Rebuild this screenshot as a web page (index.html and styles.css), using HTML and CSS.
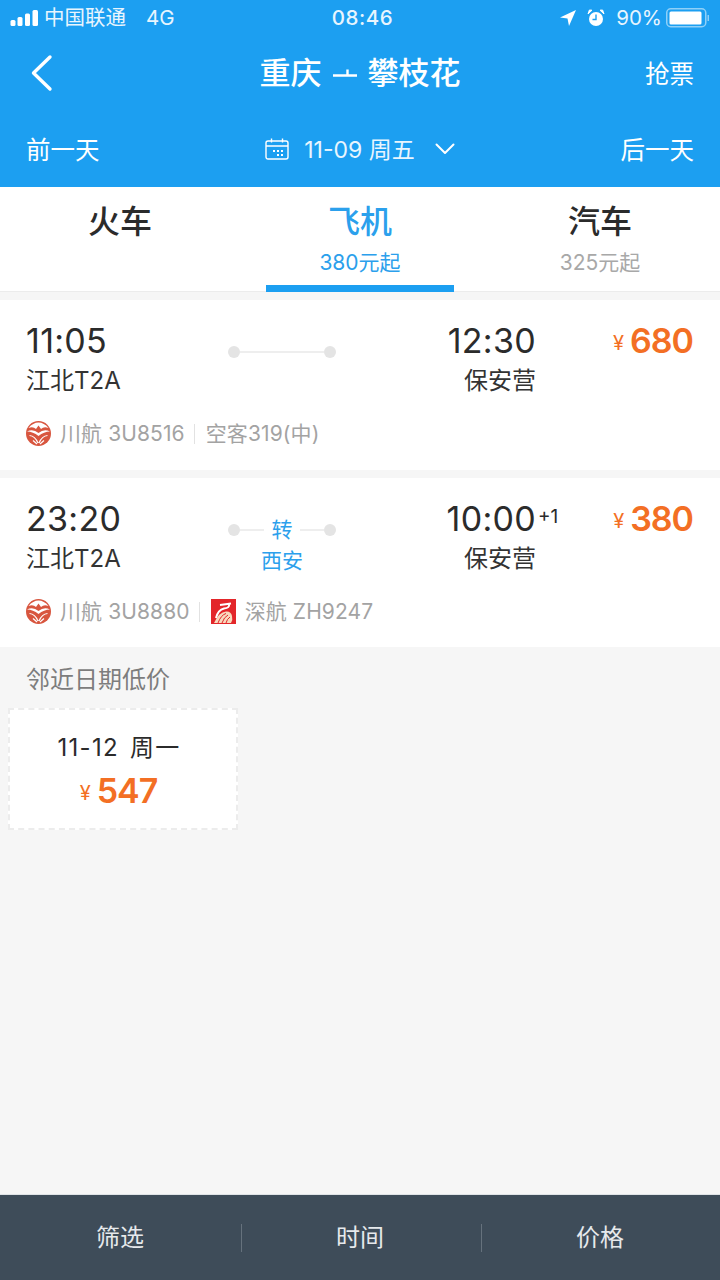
FILE: index.html
```html
<!DOCTYPE html>
<html lang="zh">
<head>
    <meta charset="utf-8">
    <title>重庆 - 攀枝花</title>
    <link rel="stylesheet" href="styles.css">
</head>
<body>
    <header class="top">
        <div class="status">
            <div class="status-left">
                <svg class="signal" width="29" height="17" viewBox="0 0 29 17">
                    <rect x="0.5" y="10" width="5" height="6" rx="1.5" fill="#fff"/>
                    <rect x="7.5" y="7" width="5" height="9" rx="1.5" fill="#fff"/>
                    <rect x="15" y="3.5" width="5" height="12.5" rx="1.5" fill="#fff"/>
                    <rect x="22.5" y="0" width="5.5" height="16" rx="1.5" fill="#fff"/>
                </svg>
                <span class="carrier">中国联通</span>
                <span class="net">4G</span>
            </div>
            <div class="clock">08:46</div>
            <div class="status-right">
                <svg width="18" height="18" viewBox="0 0 18 18"><path d="M17 1 1 8.5l7.5 1L10 17z" fill="#fff"/></svg>
                <svg class="alarm" width="18" height="18" viewBox="0 0 18 18">
                    <circle cx="9" cy="10" r="7" fill="#fff"/>
                    <path d="M9 5.5V10.5H5.5" fill="none" stroke="#1c9ff1" stroke-width="1.4"/>
                    <path d="M1 5 5 1.2 2.4 1zM17 5 13 1.2 15.6 1z" fill="#fff" stroke="#fff" stroke-width="1"/>
                </svg>
                <span class="percent">90%</span>
                <svg width="44" height="20" viewBox="0 0 44 20">
                    <rect x="0.75" y="0.75" width="39" height="18" rx="4" fill="none" stroke="#8fd0f8" stroke-width="1.5"/>
                    <rect x="3.5" y="3.5" width="32" height="13" rx="1.5" fill="#fff"/>
                    <rect x="41.5" y="7" width="1.5" height="6" fill="#8fd0f8"/>
                </svg>
            </div>
        </div>
        <div class="nav">
            <svg class="back" width="24" height="38" viewBox="0 0 24 38"><path d="M20 3 3.5 19 20 35" fill="none" stroke="#fff" stroke-width="3.4" stroke-linecap="round" stroke-linejoin="round"/></svg>
            <div class="route">
                <span>重庆</span>
                <svg width="26" height="12" viewBox="0 0 26 12"><path d="M1 8.5H25M15.5 8.5V2.5" fill="none" stroke="#fff" stroke-width="2.4"/></svg>
                <span>攀枝花</span>
            </div>
            <div class="grab">抢票</div>
        </div>
        <div class="dates">
            <div class="day-link">前一天</div>
            <div class="date-pick">
                <svg width="24" height="22" viewBox="0 0 24 22">
                    <rect x="1" y="3" width="22" height="18" rx="2" fill="none" stroke="#fff" stroke-width="1.4"/>
                    <path d="M1 8H23M6.5 0.5V4.5M17.5 0.5V4.5" fill="none" stroke="#fff" stroke-width="1.4"/>
                    <path d="M8 12h2v2H8zM12 12h2v2h-2zM16 12h2v2h-2zM12 16h2v2h-2zM16 16h2v2h-2z" fill="#fff"/>
                </svg>
                <span class="date-text">11-09 周五</span>
                <svg class="chev" width="20" height="12" viewBox="0 0 20 12"><path d="M1.5 1.5 10 10l8.5-8.5" fill="none" stroke="#fff" stroke-width="2" stroke-linecap="round" stroke-linejoin="round"/></svg>
            </div>
            <div class="day-link">后一天</div>
        </div>
    </header>

    <nav class="tabs">
        <div class="tab">
            <div class="tab-name">火车</div>
        </div>
        <div class="tab active">
            <div class="tab-name">飞机</div>
            <div class="tab-price">380元起</div>
        </div>
        <div class="tab">
            <div class="tab-name">汽车</div>
            <div class="tab-price">325元起</div>
        </div>
    </nav>

    <main class="list">
        <section class="flight">
            <div class="flight-main">
                <div class="dep">
                    <div class="time">11:05</div>
                    <div class="place">江北T2A</div>
                </div>
                <div class="line">
                    <i class="dot"></i><i class="rule"></i><i class="dot"></i>
                </div>
                <div class="arr">
                    <div class="time">12:30</div>
                    <div class="place">保安营</div>
                </div>
                <div class="price"><small>¥</small>680</div>
            </div>
            <div class="meta">
                <svg class="logo" width="25" height="25" viewBox="0 0 25 25">
                    <circle cx="12.5" cy="12.5" r="12.5" fill="#d8563f"/>
                    <path d="M2.5 7Q7 1.5 12.5 1.5T22.5 7Q18 5 15 8L12.5 4.5 10 8Q7 5 2.5 7Z" fill="#fff"/>
                    <path d="M1 10.5Q7 7.5 12.5 12Q18 7.5 24 10.5Q18 10.5 12.5 15Q7 10.5 1 10.5Z" fill="#fff"/>
                    <path d="M3.5 14.5Q9 15 12 22M21.5 14.5Q16 15 13 22M7 19.5 11 23M18 19.5 14 23" fill="none" stroke="#fff" stroke-width="1.2"/>
                </svg>
                <span class="meta-text">川航 3U8516</span>
                <i class="sep"></i>
                <span class="meta-text">空客319(中)</span>
            </div>
        </section>

        <section class="flight">
            <div class="flight-main">
                <div class="dep">
                    <div class="time">23:20</div>
                    <div class="place">江北T2A</div>
                </div>
                <div class="line">
                    <i class="dot"></i><i class="rule short"></i>
                    <span class="via">转</span>
                    <i class="rule short"></i><i class="dot"></i>
                    <span class="via-city">西安</span>
                </div>
                <div class="arr">
                    <div class="time">10:00<sup class="plus">+1</sup></div>
                    <div class="place">保安营</div>
                </div>
                <div class="price"><small>¥</small>380</div>
            </div>
            <div class="meta">
                <svg class="logo" width="25" height="25" viewBox="0 0 25 25">
                    <circle cx="12.5" cy="12.5" r="12.5" fill="#d8563f"/>
                    <path d="M2.5 7Q7 1.5 12.5 1.5T22.5 7Q18 5 15 8L12.5 4.5 10 8Q7 5 2.5 7Z" fill="#fff"/>
                    <path d="M1 10.5Q7 7.5 12.5 12Q18 7.5 24 10.5Q18 10.5 12.5 15Q7 10.5 1 10.5Z" fill="#fff"/>
                    <path d="M3.5 14.5Q9 15 12 22M21.5 14.5Q16 15 13 22M7 19.5 11 23M18 19.5 14 23" fill="none" stroke="#fff" stroke-width="1.2"/>
                </svg>
                <span class="meta-text">川航 3U8880</span>
                <i class="sep"></i>
                <svg class="logo" width="25" height="25" viewBox="0 0 25 25">
                    <rect width="25" height="25" fill="#e3262a"/>
                    <path d="M9 6 20 4.5M18 5Q19 9 13 9.5Q7 11 5 19" fill="none" stroke="#fff" stroke-width="2"/>
                    <path d="M3 24Q8 13 15 12.5Q20 12 21 17Q22 21 20 24Z" fill="#f8d9bd"/>
                    <path d="M7 24Q10 16 15 14.5M11 24Q13 18 17 16M15 24Q16 20 19 18" fill="none" stroke="#e3262a" stroke-width="1"/>
                </svg>
                <span class="meta-text">深航 ZH9247</span>
            </div>
        </section>

        <h2 class="near-title">邻近日期低价</h2>
        <div class="near-card">
            <div class="near-date">11-12 周一</div>
            <div class="price near-price"><small>¥</small>547</div>
        </div>
    </main>

    <footer class="bottom">
        <div class="bottom-item">筛选</div>
        <div class="bottom-item">时间</div>
        <div class="bottom-item">价格</div>
    </footer>
</body>
</html>
```

FILE: styles.css
```css
* {
    box-sizing: border-box;
}
html, body {
    height: 100%;
}
body {
    display: flex;
    flex-direction: column;
    height: 1280px;
    margin: 0;
    background: #f6f6f6;
    color: #2b2b2b;
    font-family: Inter, "Noto Sans CJK SC", sans-serif;
    overflow: hidden;
}
.top {
    height: 187px;
    padding: 0 26px;
    background: #1c9ff1;
    color: #fff;
}
.status {
    display: flex;
    align-items: center;
    justify-content: space-between;
    height: 36px;
    margin: 0 -26px;
    padding: 0 10px 0 10px;
    font-size: 20.5px;
    line-height: 24px;
    color: #e8f5fe;
}
.status-left, .status-right {
    display: flex;
    align-items: center;
    width: 270px;
}
.status-right {
    justify-content: flex-end;
}
.carrier {
    margin-left: 5px;
}
.net {
    margin-left: 20px;
}
.clock {
    margin-left: 5px;
    font-weight: 500;
    letter-spacing: 0.6px;
}
.alarm {
    margin-left: 10px;
}
.percent {
    margin: 0 4px 0 11px;
}
.nav {
    display: flex;
    align-items: center;
    justify-content: space-between;
    height: 74px;
}
.back {
    margin-left: 4px;
}
.route {
    display: flex;
    align-items: center;
    gap: 10px;
    padding-bottom: 1px;
    font-size: 31px;
    line-height: 40px;
    font-weight: 500;
    margin-left: 21px;
}
.grab {
    padding-top: 1px;
    font-size: 24.5px;
    line-height: 30px;
}
.dates {
    display: flex;
    align-items: center;
    justify-content: space-between;
    height: 78px;
}
.day-link {
    padding-top: 2px;
    font-size: 24.5px;
    line-height: 30px;
}
.date-pick {
    display: flex;
    align-items: center;
    font-size: 23px;
    line-height: 30px;
    color: #e8f5fe;
}
.date-text {
    margin: 0 20px 0 15px;
    padding-top: 1px;
}
.tabs {
    display: flex;
    height: 105px;
    background: #fff;
    border-bottom: 1px solid #ececec;
}
.tab {
    flex: 1;
    padding-top: 13px;
    text-align: center;
    position: relative;
}
.tab-name {
    height: 44px;
    font-size: 32px;
    line-height: 44px;
    font-weight: 500;
}
.tab-price {
    margin-top: 4px;
    font-size: 21px;
    line-height: 30px;
    color: #a8a8a8;
}
.tab.active .tab-name, .tab.active .tab-price {
    color: #2ba0ec;
}
.tab.active::after {
    content: "";
    position: absolute;
    left: 26px;
    right: 26px;
    bottom: -1px;
    height: 7px;
    background: #1c9ff1;
}
.list {
    flex: 1;
    padding-top: 8px;
}
.flight {
    height: 170px;
    margin-bottom: 8px;
    padding: 20px 26px 0;
    background: #fff;
}
.flight + .flight {
    height: 169px;
    margin-bottom: 0;
}
.flight-main {
    display: flex;
    height: 90px;
}
.dep {
    width: 186px;
}
.time {
    padding-top: 1px;
    font-size: 34px;
    line-height: 40px;
    letter-spacing: 0.3px;
    color: #2b2b2b;
}
.place {
    margin-top: 3px;
    font-size: 24px;
    line-height: 34px;
    color: #333;
}
.line {
    display: flex;
    flex-wrap: wrap;
    align-content: flex-start;
    align-items: center;
    justify-content: center;
    width: 140px;
    padding-top: 26px;
}
.dot {
    width: 12px;
    height: 12px;
    border-radius: 50%;
    background: #e4e4e4;
}
.rule {
    width: 84px;
    height: 2px;
    background: #eee;
}
.rule.short {
    width: 24px;
}
.via {
    width: 36px;
    font-size: 21px;
    line-height: 12px;
    text-align: center;
    color: #2ba0ec;
}
.via-city {
    width: 100%;
    margin-top: 13px;
    font-size: 21px;
    line-height: 24px;
    text-align: center;
    color: #2ba0ec;
}
.arr {
    width: 184px;
    text-align: right;
}
.arr .time {
    position: relative;
}
.plus {
    position: absolute;
    top: 9px;
    margin-left: 2px;
    font-size: 19px;
    line-height: 20px;
    letter-spacing: 0;
}
.price {
    flex: 1;
    padding-top: 1px;
    padding-right: 1px;
    font-size: 34px;
    line-height: 40px;
    font-weight: 600;
    letter-spacing: -1px;
    text-align: right;
    color: #f36f24;
}
.price small {
    margin-right: 7px;
    font-size: 20px;
    font-weight: 400;
    vertical-align: 3px;
}
.meta {
    display: flex;
    align-items: center;
    height: 25px;
    margin-top: 11px;
}
.meta-text {
    margin-left: 9px;
    font-size: 21px;
    line-height: 25px;
    letter-spacing: 0.1px;
    color: #a3a3a3;
}
.sep {
    width: 1px;
    height: 20px;
    margin: 0 2px 0 9px;
    background: #e2e2e2;
}
.sep + .logo {
    margin-left: 9px;
}
.near-title {
    margin: 0;
    padding: 18px 26px 0;
    height: 61px;
    font-size: 24px;
    line-height: 30px;
    font-weight: 400;
    color: #7d7d7d;
}
.near-card {
    width: 230px;
    height: 122px;
    margin-left: 8px;
    padding-top: 21px;
    text-align: center;
    background: #fff;
    border: 2px dashed #ececec;
}
.near-date {
    padding-right: 8px;
    font-size: 24px;
    line-height: 34px;
    letter-spacing: 1.3px;
    word-spacing: 3px;
}
.near-price {
    padding-top: 6px;
    padding-right: 9px;
    text-align: center;
}
.bottom {
    display: flex;
    align-items: center;
    height: 86px;
    background: #3e4c59;
    border-top: 1px solid #dfe3e6;
}
.bottom-item {
    position: relative;
    flex: 1;
    font-size: 24px;
    line-height: 26px;
    text-align: center;
    color: #e6e9ec;
}
.bottom-item + .bottom-item::before {
    content: "";
    position: absolute;
    left: 1px;
    top: -1px;
    width: 1px;
    height: 28px;
    background: #66727d;
}
```
